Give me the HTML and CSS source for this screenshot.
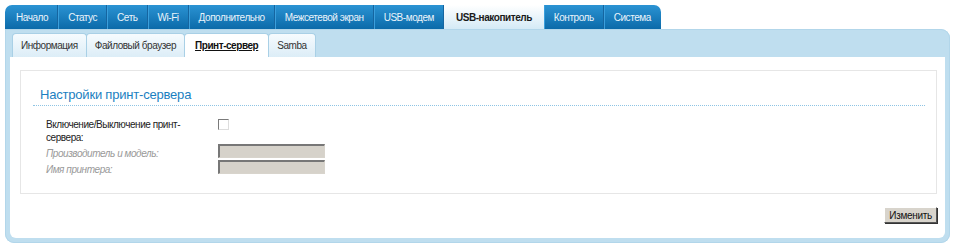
FILE: index.html
```html
<!DOCTYPE html>
<html lang="ru">
<head>
    <meta charset="UTF-8">
    <title>USB-накопитель — Принт-сервер</title>
    <link rel="stylesheet" href="styles.css">
</head>
<body>
    <ul class="menu">
        <li>Начало</li>
        <li>Статус</li>
        <li>Сеть</li>
        <li>Wi-Fi</li>
        <li>Дополнительно</li>
        <li>Межсетевой экран</li>
        <li>USB-модем</li>
        <li class="active">USB-накопитель</li>
        <li>Контроль</li>
        <li>Система</li>
    </ul>

    <div class="panel">
        <ul class="subtabs">
            <li>Информация</li>
            <li>Файловый браузер</li>
            <li class="active">Принт-сервер</li>
            <li>Samba</li>
        </ul>

        <div class="content">
            <div class="box">
                <h2 class="section-title">Настройки принт-сервера</h2>
                <div class="row">
                    <label class="label">Включение/Выключение принт-сервера:</label>
                    <span class="checkbox"></span>
                </div>
                <div class="row">
                    <label class="label disabled">Производитель и модель:</label>
                    <span class="field"></span>
                </div>
                <div class="row">
                    <label class="label disabled">Имя принтера:</label>
                    <span class="field"></span>
                </div>
            </div>
            <div class="actions">
                <button class="btn">Изменить</button>
            </div>
        </div>
    </div>
</body>
</html>
```

FILE: styles.css
```css
body {
    margin: 0;
    padding: 5px;
    font-family: "Liberation Sans", Arial, sans-serif;
    font-size: 10px;
    letter-spacing: -0.45px;
    color: #222;
    background: #fff;
}

ul {
    list-style: none;
    margin: 0;
    padding: 0;
}

.menu {
    display: flex;
    width: fit-content;
    height: 24px;
    background: linear-gradient(#2b93d3, #0b6aa9);
    border-radius: 7px 7px 0 0;
    overflow: hidden;
}

.menu li {
    display: flex;
    align-items: center;
    padding: 0 9px;
    color: #eaf4fb;
    border-right: 1px solid #1565a0;
    border-left: 1px solid #3a9fdc;
}

.menu li:first-child {
    border-left: none;
    padding-left: 11px;
}

.menu li:last-child {
    border-right: none;
    padding-right: 10px;
}

.menu li.active {
    background: linear-gradient(#ffffff, #d4eaf6);
    color: #1a1a1a;
    font-weight: bold;
    border: none;
    padding: 0 12px;
}

.panel {
    width: 945px;
    box-sizing: border-box;
    background: #bfdeef;
    border-radius: 0 9px 9px 9px;
    padding: 4px 5px 5px 5px;
    box-shadow: inset 0 0 0 1px #b2d6ea;
}

.subtabs {
    display: flex;
    height: 24px;
    padding-left: 2px;
}

.subtabs li {
    display: flex;
    align-items: center;
    padding: 0 8px;
    color: #333;
    background: linear-gradient(#f6fbfe, #dcedf7);
    border: 1px solid #a9d0e6;
    border-bottom: none;
    border-radius: 4px 4px 0 0;
    margin-right: -1px;
}

.subtabs li.active {
    background: #fff;
    color: #111;
    font-weight: bold;
    text-decoration: underline;
    padding: 0 10px;
}

.content {
    background: #fff;
    height: 181px;
    border-radius: 0 0 6px 6px;
    padding: 13px 8px 0 10px;
    box-sizing: border-box;
}

.box {
    height: 124px;
    border: 1px solid #e6e6e6;
    box-sizing: border-box;
    padding: 16px 11px 0 12px;
}

.section-title {
    margin: 0 0 12px;
    padding: 0 0 3px 7px;
    font-size: 13px;
    font-weight: normal;
    letter-spacing: -0.2px;
    color: #1b7fc1;
    border-bottom: 1px dotted #8ec4e4;
}

.row {
    display: flex;
    align-items: flex-start;
    margin-bottom: 3px;
    padding-left: 13px;
}

.label {
    width: 150px;
    margin-right: 22px;
    line-height: 13px;
    color: #222;
}

.label.disabled {
    color: #999;
    font-style: italic;
}

.checkbox {
    width: 9px;
    height: 9px;
    margin-top: 1px;
    border: 1px solid #7a7a7a;
    border-right-color: #ddd;
    border-bottom-color: #ddd;
    background: #fff;
}

.field {
    width: 104px;
    height: 11px;
    border: 1px solid #d8d4cc;
    border-top: 2px solid #777;
    border-left: 2px solid #777;
    background: #d6d2ca;
    margin-top: -3px;
}

.actions {
    display: flex;
    justify-content: flex-end;
    padding-top: 13px;
}

.btn {
    font-family: inherit;
    font-size: 10px;
    letter-spacing: -0.3px;
    color: #111;
    height: 16px;
    padding: 0 4px;
    background: #d8d4cc;
    border: 1px solid #fff;
    border-right-color: #555;
    border-bottom-color: #555;
    box-shadow: 1px 1px 0 #333;
}
```
